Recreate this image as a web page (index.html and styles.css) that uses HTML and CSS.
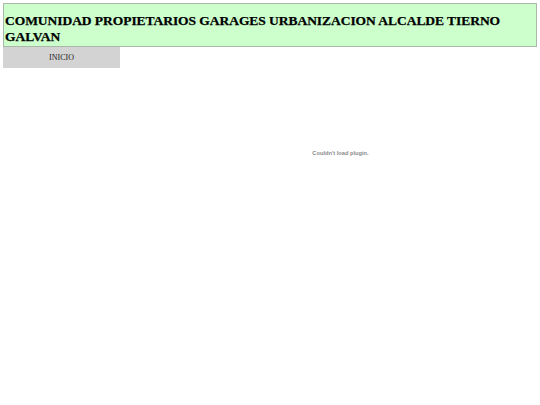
FILE: index.html
```html
<!DOCTYPE html>
<html>
<head>
<meta charset="utf-8">
<link rel="stylesheet" href="styles.css">
</head>
<body>
<div class="page">
  <header class="banner">
    <h1 class="title">COMUNIDAD PROPIETARIOS GARAGES URBANIZACION ALCALDE TIERNO GALVAN</h1>
  </header>
  <div class="content">
    <nav class="menu">
      <a class="menu-item" href="#">INICIO</a>
    </nav>
    <div class="plugin">
      <span class="plugin-msg">Couldn't load plugin.</span>
    </div>
  </div>
</div>
</body>
</html>
```
FILE: styles.css
```css
html, body {
  margin: 0;
  padding: 0;
  background: #ffffff;
}
.page {
  padding: 3px;
}
.banner {
  background: #ccffcc;
  border: 1px solid #a9b8a9;
  padding: 7px 1px 0;
  height: 35px;
  display: flex;
  align-items: center;
}
.title {
  margin: 0;
  font-family: "Liberation Serif", "Times New Roman", serif;
  font-weight: bold;
  font-size: 13.5px;
  line-height: 16px;
  letter-spacing: -0.05px;
  color: #000;
  -webkit-text-stroke: 0.25px #000;
}
.content {
  display: flex;
}
.menu {
  width: 117px;
  flex: none;
}
.menu-item {
  display: block;
  background: #d3d3d3;
  height: 21px;
  line-height: 21px;
  text-align: center;
  font-family: "Liberation Serif", "Times New Roman", serif;
  font-size: 8px;
  color: #222;
  text-decoration: none;
}
.plugin {
  flex: 1;
  height: 212px;
  padding-left: 24px;
  display: flex;
  align-items: center;
  justify-content: center;
}
.plugin-msg {
  font-family: "Liberation Sans", Arial, sans-serif;
  font-size: 5.7px;
  font-weight: bold;
  color: #8a8a8a;
}
```
